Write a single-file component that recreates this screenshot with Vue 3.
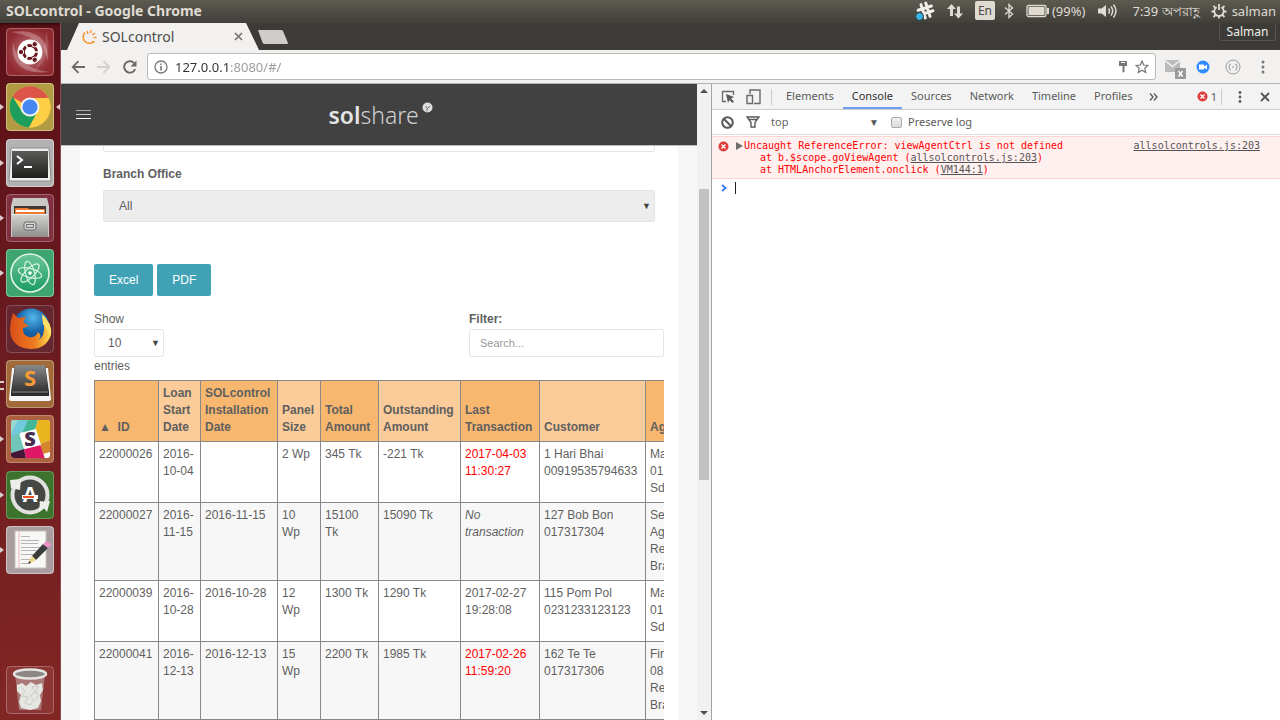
<script setup>
import { ref } from 'vue'

const url = ref('127.0.0.1:8080/#/')
const branch = ref('All')
const pageSize = ref('10')
const search = ref('')
const preserve = ref(false)
const command = ref('')
const activeTab = ref('Console')
const tabs = ['Elements', 'Console', 'Sources', 'Network', 'Timeline', 'Profiles']

const columns = [
  { key: 'id', lines: ['▲  ID'] },
  { key: 'start', lines: ['Loan', 'Start', 'Date'] },
  { key: 'install', lines: ['SOLcontrol', 'Installation', 'Date'] },
  { key: 'panel', lines: ['Panel', 'Size'] },
  { key: 'total', lines: ['Total', 'Amount'] },
  { key: 'due', lines: ['Outstanding', 'Amount'] },
  { key: 'last', lines: ['Last', 'Transaction'] },
  { key: 'customer', lines: ['Customer'] },
  { key: 'agent', lines: ['Ag'] }
]

const rows = [
  { id: '22000026', start: ['2016-', '10-04'], install: [], panel: ['2 Wp'], total: ['345 Tk'], due: ['-221 Tk'], last: ['2017-04-03', '11:30:27'], state: 'late', customer: ['1 Hari Bhai', '00919535794633'], agent: ['Ma', '01', 'Sd'] },
  { id: '22000027', start: ['2016-', '11-15'], install: ['2016-11-15'], panel: ['10', 'Wp'], total: ['15100', 'Tk'], due: ['15090 Tk'], last: ['No', 'transaction'], state: 'none', customer: ['127 Bob Bon', '017317304'], agent: ['Se', 'Ag', 'Re', 'Bra'] },
  { id: '22000039', start: ['2016-', '10-28'], install: ['2016-10-28'], panel: ['12', 'Wp'], total: ['1300 Tk'], due: ['1290 Tk'], last: ['2017-02-27', '19:28:08'], state: '', customer: ['115 Pom Pol', '0231233123123'], agent: ['Ma', '01', 'Sd'] },
  { id: '22000041', start: ['2016-', '12-13'], install: ['2016-12-13'], panel: ['15', 'Wp'], total: ['2200 Tk'], due: ['1985 Tk'], last: ['2017-02-26', '11:59:20'], state: 'late', customer: ['162 Te Te', '017317306'], agent: ['Fir', '08', 'Re', 'Bra'] }
]
</script>

<template>
  <div class="desktop">
    <header class="panel">
      <h1 class="win-title">SOLcontrol - Google Chrome</h1>
      <div class="tray">
        <svg class="t-slack" width="20" height="20" viewBox="0 0 20 20">
          <g stroke="#f2f0ea" stroke-width="3" stroke-linecap="round" transform="rotate(-18 10.500 9.500)"><path d="M8 2.500v14M13 2.500v14M3.500 7h14M3.500 12h14" /></g>
          <circle cx="4.500" cy="15.500" r="4" fill="#35b5e5" stroke="#34322e" />
        </svg>
        <svg class="t-net" width="16" height="16" viewBox="0 0 16 16" fill="#dfdbd2"><path d="M4.500 1 9 6H6v7H3V6H0zM11.500 15.500 7 10.500h3v-7h3v7h3z" /></svg>
        <span class="t-lang">En</span>
        <svg class="t-bt" width="10" height="16" viewBox="0 0 10 16" fill="none" stroke="#dfdbd2" stroke-width="1.300"><path d="M1 4.500 8.500 11 5 14.500V1.500L8.500 5 1 11.500" /></svg>
        <svg class="t-bat" width="23" height="14" viewBox="0 0 23 14"><rect x="1" y="1.500" width="19" height="11" rx="1.500" fill="none" stroke="#dfdbd2" stroke-width="1.300" /><rect x="2.500" y="3" width="16" height="8" fill="#dfdbd2" /><rect x="21" y="4" width="2" height="6" fill="#dfdbd2" /></svg>
        <span class="t-pct">(99%)</span>
        <svg class="t-vol" width="20" height="16" viewBox="0 0 20 16" fill="none" stroke="#dfdbd2" stroke-width="1.500"><path d="M0 5.500h3.500L8 2v12l-4.500-3.500H0z" fill="#dfdbd2" stroke="none" /><path d="M10.500 5.500q2 2.500 0 5M13 3.500q3.500 4.500 0 9M15.500 1.500q5 6.500 0 13" /></svg>
        <span class="t-time">7:39 অপরাহ্ণ</span>
        <svg class="t-gear" width="16" height="16" viewBox="0 0 16 16" fill="none" stroke="#dfdbd2"><path d="M5.700 4.200a4.700 4.700 0 1 0 4.600 0" stroke-width="1.800" /><path d="M8 1v6M2.500 2.800l2 2M13.500 2.800l-2 2M.5 8.500h3M12.500 8.500h3M2.500 14l2-2M13.500 14l-2-2M8 12.500v3" stroke-width="1.800" /></svg>
        <span class="t-user">salman</span>
      </div>
    </header>

    <div class="workspace">
      <nav class="launcher" aria-label="Launcher">
        <div class="apps">
          <button class="app" aria-label="Search">
            <svg viewBox="0 0 48 48"><defs><radialGradient id="gDash"><stop stop-color="#c98a8a" /><stop offset=".7" stop-color="#a04047" /><stop offset="1" stop-color="#902a31" /></radialGradient></defs><rect width="48" height="48" rx="4" fill="url(#gDash)" /><path d="M5 4C28 0 44 10 42 33 38 15 27 8 5 4zM43 44C18 47 4 36 7 14 10 32 22 41 43 44z" fill="#fff" opacity=".25" /><path d="M40 3Q48 25 29 43 40 23 40 3z" fill="#fff" opacity=".12" /><circle cx="24" cy="24" r="12.500" fill="#fff" /><circle cx="24" cy="24" r="6.500" fill="none" stroke="#6a1820" stroke-width="3" /><g stroke="#fff" stroke-width="1.500"><path d="M24 24 35 24M24 24 18.500 14.500M24 24 18.500 33.500" /></g><circle cx="24" cy="24" r="4.800" fill="#fff" /><g fill="#6a1820" stroke="#fff"><circle cx="15" cy="24" r="2.700" /><circle cx="28.700" cy="16.200" r="2.700" /><circle cx="28.700" cy="31.800" r="2.700" /></g><rect x=".5" y=".5" width="47" height="47" rx="4" fill="none" stroke="#fff" opacity=".28" /></svg>
          </button>
          <button class="app running focused" aria-label="Google Chrome">
            <svg viewBox="0 0 48 48"><rect width="48" height="48" rx="4" fill="#b19b43" /><circle cx="24" cy="24" r="20.500" fill="#fdcf45" /><path d="M24 24 6 14A20.500 20.500 0 0 1 42.500 15H24z" fill="#dd5549" /><path d="M6.500 13.500A20.500 20.500 0 0 0 23 44.500L32 28 24 24 15 27z" fill="#1d9e5d" /><path d="M24 15h18.500a20.500 20.500 0 0 1-19.500 29.500L32 28z" fill="#fdcf45" /><circle cx="24" cy="24" r="9.500" fill="#f4f4f1" /><circle cx="24" cy="24" r="7.600" fill="#4688f1" /><rect x=".5" y=".5" width="47" height="47" rx="4" fill="none" stroke="#fff" opacity=".35" /></svg>
          </button>
          <button class="app running" aria-label="Terminal">
            <svg viewBox="0 0 48 48"><defs><linearGradient id="gTerm" x2="0" y2="1"><stop stop-color="#5b5c59" /><stop offset="1" stop-color="#1f201e" /></linearGradient></defs><rect width="48" height="48" rx="4" fill="#b3b1b1" /><path d="M5 9h38l2 33H3z" fill="#eeeeec" stroke="#8c8c8a" /><rect x="6" y="12" width="36" height="27" fill="url(#gTerm)" /><path d="m11 17 5 4-5 4M18 28h8" fill="none" stroke="#fff" stroke-width="2" /><rect x=".5" y=".5" width="47" height="47" rx="4" fill="none" stroke="#fff" opacity=".4" /></svg>
          </button>
          <button class="app running" aria-label="Files">
            <svg viewBox="0 0 48 48"><defs><linearGradient id="gFile" x2="0" y2="1"><stop stop-color="#d5d5d3" /><stop offset="1" stop-color="#8f8f8d" /></linearGradient></defs><rect width="48" height="48" rx="4" fill="#803140" /><path d="M7 4h34l2 8v31H5V12z" fill="#c9c9c6" /><path d="M8 12h32v12H8z" fill="#413936" /><path d="M9 14h13l1 1h16v7H9z" fill="#ee7a31" /><path d="M10 16h28v2H10z" fill="#fff" /><rect x="6" y="20" width="36" height="23" fill="url(#gFile)" /><path d="M6 20.500h36" stroke="#eee" /><rect x="18" y="28" width="12" height="8" rx="2" fill="#d4d4d2" stroke="#686868" /><rect x="20.500" y="30.500" width="7" height="3" fill="none" stroke="#777" /><rect x=".5" y=".5" width="47" height="47" rx="4" fill="none" stroke="#fff" opacity=".25" /></svg>
          </button>
          <button class="app running" aria-label="Atom">
            <svg viewBox="0 0 48 48"><defs><linearGradient id="gAtom" x2="0" y2="1"><stop stop-color="#6cc596" /><stop offset="1" stop-color="#1a9c66" /></linearGradient></defs><rect width="48" height="48" rx="4" fill="#3fa56e" /><circle cx="24" cy="24" r="19" fill="url(#gAtom)" stroke="#e1f4e8" stroke-width="1.600" /><g fill="none" stroke="#d9f4e5" stroke-width="1.200"><ellipse cx="24" cy="24" rx="12" ry="4.500" transform="rotate(15 24 24)" /><ellipse cx="24" cy="24" rx="12" ry="4.500" transform="rotate(75 24 24)" /><ellipse cx="24" cy="24" rx="12" ry="4.500" transform="rotate(135 24 24)" /></g><circle cx="24" cy="24" r="1.800" fill="#fff" /><rect x=".5" y=".5" width="47" height="47" rx="4" fill="none" stroke="#fff" opacity=".35" /></svg>
          </button>
          <button class="app" aria-label="Firefox">
            <svg viewBox="0 0 48 48"><defs><radialGradient id="gFox" cx=".55" cy=".25" r=".8"><stop stop-color="#53b8e8" /><stop offset=".5" stop-color="#1763a8" /><stop offset="1" stop-color="#12386e" /></radialGradient><linearGradient id="gFur" x2="1" y2="0"><stop stop-color="#d94e19" /><stop offset=".6" stop-color="#ee7c1f" /><stop offset="1" stop-color="#ffe052" /></linearGradient></defs><rect width="48" height="48" rx="4" fill="#662630" /><circle cx="25" cy="22" r="18.500" fill="url(#gFox)" /><path d="M7 8 12 13 20 12 17 17 23 21 17 23Q16 30 23 32 30 33 32 27 37 31 32 35 39 32 38 20L36 12Q47 19 45 30 40 44 25 44 5 43 4 25 4 16 7 8z" fill="url(#gFur)" /><path d="M36 9q10 8 9 22-5-8-8-12z" fill="#ffdf68" /><rect x=".5" y=".5" width="47" height="47" rx="4" fill="none" stroke="#fff" opacity=".2" /></svg>
          </button>
          <button class="app running double" aria-label="Sublime Text">
            <svg viewBox="0 0 48 48"><defs><linearGradient id="gSub" x2="0" y2="1"><stop stop-color="#8a8a8a" /><stop offset="1" stop-color="#353535" /></linearGradient></defs><rect width="48" height="48" rx="4" fill="#a26a39" /><path d="M6 8h36l3 31q0 2-3 2H6q-3 0-3-2z" fill="#f5f5f5" /><path d="M9 5h30l4 27v4H5v-4z" fill="#2c2c2c" /><path d="M9 5h30l3 26H6z" fill="url(#gSub)" /><path d="M6 32h36" stroke="#8d8d8d" /><text x="24" y="26" text-anchor="middle" font-family="Open Sans,sans-serif" font-size="22" font-weight="700" fill="#f79a35">S</text><rect x=".5" y=".5" width="47" height="47" rx="4" fill="none" stroke="#fff" opacity=".3" /></svg>
          </button>
          <button class="app running" aria-label="Slack">
            <svg viewBox="0 0 48 48"><defs><clipPath id="cSlack"><rect x="5" y="5" width="39" height="38" rx="3" /></clipPath></defs><rect width="48" height="48" rx="4" fill="#ac6140" /><g clip-path="url(#cSlack)"><path d="M5 5h39v39H5z" fill="#fff" /><path d="M5 5h9L5 22z" fill="#98d8cf" /><path d="M12 5h11l-7 13L5 22v-3z" fill="#70cadb" /><path d="M22 5h10l-3 10-13 3z" fill="#42b899" /><path d="M32 5h12v20L34 29 29 15z" fill="#e9b51e" /><path d="m34 29 10-4v12l-7 2z" fill="#d5862b" /><path d="M18 34 34 29l5 15H20z" fill="#e01765" /><path d="M5 21 13 18l5 16-13 4z" fill="#70c7b9" /><path d="M5 38 18 34l2 10H5z" fill="#451638" /></g><path d="M14 18 30 14l5 16-16 4z" fill="#fff" /><text x="24" y="31" text-anchor="middle" font-family="Open Sans,sans-serif" font-size="20" font-weight="800" fill="#482c4c">S</text><rect x=".5" y=".5" width="47" height="47" rx="4" fill="none" stroke="#fff" opacity=".25" /></svg>
          </button>
          <button class="app running" aria-label="Software Updater">
            <svg viewBox="0 0 48 48"><rect width="48" height="48" rx="4" fill="#3d742d" /><circle cx="24" cy="24" r="17.500" fill="#454744" stroke="#e0e1df" stroke-width="4" /><path d="M15 7 14 19 5 17zM5 17 15 8 4 9zM33 41 34 30 44 32zM33 31l11-1-3 11z" fill="#eeeeec" /><text x="24" y="31" text-anchor="middle" font-family="Open Sans,sans-serif" font-size="21" font-weight="700" fill="#fff">A</text><path d="M16 24h16v4H16z" fill="#fff" /><path d="M17 25h11v2H17z" fill="#e9541f" /><rect x=".5" y=".5" width="47" height="47" rx="4" fill="none" stroke="#fff" opacity=".25" /></svg>
          </button>
          <button class="app running" aria-label="Text Editor">
            <svg viewBox="0 0 48 48"><rect width="48" height="48" rx="4" fill="#a99da0" /><path d="M9 5h31v37H9z" fill="#f7f7f5" stroke="#c3c3c1" /><path d="M13 5v37" stroke="#efb3b3" /><g stroke="#b5b5b5"><path d="M15 10.500h9M15 14.500h18M15 17.500h17M15 21.500h20M15 24.500h18M15 28.500h15M15 33.500h12M15 37.500h9" /></g><path d="m26 30 11-12 5 4-12 12z" fill="#3b3d3b" /><path d="M37 18 40 15.500q4 0 5 4L42 22z" fill="#eb8fc7" /><path d="m26 30 4 4-8 4z" fill="#e7d87c" /><path d="m23.500 35-1.500 3 3-1.500z" fill="#222" /><rect x=".5" y=".5" width="47" height="47" rx="4" fill="none" stroke="#fff" opacity=".4" /></svg>
          </button>
        </div>
        <button class="app" aria-label="Trash">
          <svg viewBox="0 0 48 48"><rect width="48" height="48" rx="4" fill="#8c3535" /><path d="M9 8h30l-4 36H13z" fill="#b79b99" opacity=".65" /><ellipse cx="24" cy="8" rx="16" ry="4.500" fill="#8c8785" stroke="#e4e4e1" stroke-width="2.500" /><path d="M11 19 16 17 20 20 25 16 30 19 36 17 37 24 34 29 35 35 32 42 24 44 15 42 13 36 15 29 11 25z" fill="#e5e5e2" /><path d="m15 21 4 4-3 5 6 1-3 6 5 2 4-5-4-4 5-4-3-5 6-1-2 7 3 2-4 5" fill="none" stroke="#cacac6" /><rect x=".5" y=".5" width="47" height="47" rx="4" fill="none" stroke="#fff" opacity=".25" /></svg>
        </button>
      </nav>

      <main class="browser">
        <div class="tabstrip">
          <div class="tab">
            <svg class="favicon" width="16" height="16" viewBox="0 0 16 16" fill="none" stroke="#f79433"><path d="M4 3.500A6 6 0 1 0 13 12.500" stroke-width="1.700" /><path d="m6 2 1 3M10 1 9.500 4M14 4l-3 2M15.500 8.500h-3M11.500 12l2 1.500" stroke-width="1.500" /></svg>
            <span class="tab-name">SOLcontrol</span>
            <button class="bare" aria-label="Close tab"><svg width="9" height="9" viewBox="0 0 9 9" stroke="#77756f" stroke-width="1.700"><path d="m1 1 7 7M8 1 1 8" /></svg></button>
          </div>
          <button class="bare newtab" aria-label="New tab"><svg width="32" height="14" viewBox="0 0 32 14"><path d="M1 0h23q1.500 0 2 1l5 12q0 1-1 1H8q-2 0-2.500-1.500z" fill="#cfcdca" /></svg></button>
          <button class="profile">Salman</button>
        </div>

        <div class="toolbar">
          <button class="bare" aria-label="Back"><svg width="14" height="14" viewBox="0 0 14 14" fill="none" stroke="#6b6965" stroke-width="1.800"><path d="M14 7H2M7.500 1.200 1.700 7l5.800 5.800" /></svg></button>
          <button class="bare" aria-label="Forward"><svg width="14" height="14" viewBox="0 0 14 14" fill="none" stroke="#d2d0cd" stroke-width="1.800"><path d="M0 7h12M6.500 1.200 12.300 7l-5.800 5.800" /></svg></button>
          <button class="bare" aria-label="Reload"><svg width="14" height="14" viewBox="0 0 14 14" fill="none" stroke="#6b6965" stroke-width="1.900"><path d="M12.200 9A5.700 5.700 0 1 1 11 3" /><path d="M13.500.5v6h-6z" fill="#6b6965" stroke="none" /></svg></button>
          <div class="omnibox">
            <svg width="14" height="14" viewBox="0 0 14 14" fill="none" stroke="#777" stroke-width="1.300"><circle cx="7" cy="7" r="6" /><path d="M7 6v4.500M7 3.500V5" stroke-width="1.600" /></svg>
            <input v-model="url" class="url" aria-label="Address" />
            <svg width="10" height="13" viewBox="0 0 10 13" fill="#777"><path d="M1 1h8v5H6.500v6l-2 .5V6H1z" /><path d="M3 2.500h4" stroke="#fff" /></svg>
            <svg width="14" height="14" viewBox="0 0 14 14" fill="none" stroke="#777" stroke-width="1.200"><path d="m7 1 1.700 4 4.300.4-3.200 2.900.9 4.200L7 10.300l-3.700 2.200.9-4.200L1 5.400 5.300 5z" /></svg>
          </div>
          <div class="extensions">
            <button class="bare" aria-label="Mail checker"><svg width="22" height="20" viewBox="0 0 22 20"><path d="M0 1h15v12H0z" fill="#bbb" /><path d="m0 1.500 7.500 6 7.500-6" fill="none" stroke="#f2f1f0" stroke-width="1.500" /><rect x="10" y="9" width="11" height="11" rx="1" fill="#999" /><path d="m13.500 12 4 5.500M17.500 12l-4 5.500" stroke="#fff" stroke-width="1.400" /></svg></button>
            <button class="bare" aria-label="Video meeting"><svg width="14" height="14" viewBox="0 0 14 14"><circle cx="7" cy="7" r="6.500" fill="#2d8cff" /><path d="M3 4.500h5v1.800l3-1.500v4.500L8 8v1.500H3z" fill="#fff" /></svg></button>
            <button class="bare" aria-label="JSON viewer"><svg width="16" height="16" viewBox="0 0 16 16" fill="none" stroke="#999"><circle cx="8" cy="8" r="7" /><path d="M6 5q-2 0-1.500 2L3.500 8l1 1q-.5 2 1.500 2M10 5q2 0 1.500 2l1 1-1 1q.5 2-1.500 2M7 8h2" /></svg></button>
            <button class="bare" aria-label="Menu"><svg width="4" height="14" viewBox="0 0 4 14" fill="#777"><circle cx="2" cy="2" r="1.500" /><circle cx="2" cy="7" r="1.500" /><circle cx="2" cy="12" r="1.500" /></svg></button>
          </div>
        </div>

        <div class="content">
          <section class="page">
            <div class="page-main">
              <div class="app-header">
                <button class="bare burger" aria-label="Menu"><svg width="15" height="10" viewBox="0 0 15 10" stroke="#fff"><path d="M0 .5h15" stroke="#aaa" /><path d="M0 4.500h15" stroke="#ccc" /><path d="M0 8.500h15" /></svg></button>
                <a class="brand" href="#/"><span><b>sol</b>share</span><svg width="11" height="11" viewBox="0 0 11 11"><circle cx="5.500" cy="5.500" r="5" fill="#dedede" /><path d="M5 9.500V7l3-3M5 6.500 4 4" fill="none" stroke="#777" /></svg></a>
              </div>
              <div class="scroller">
                <div class="card">
                  <div class="fields">
                    <input class="hidden-top" aria-label="Organisation" />
                    <label class="branch-label" for="branch">Branch Office</label>
                    <div class="select-box">
                      <select id="branch" v-model="branch" class="branch"><option>All</option></select>
                      <span class="caret">▼</span>
                    </div>
                  </div>
                  <div class="exports">
                    <button class="export">Excel</button>
                    <button class="export">PDF</button>
                  </div>
                  <div class="controls">
                    <div class="entries">
                      <label for="size">Show</label>
                      <div class="select-box">
                        <select id="size" v-model="pageSize" class="size"><option>10</option><option>25</option></select>
                        <span class="caret">▼</span>
                      </div>
                      <span>entries</span>
                    </div>
                    <div class="filter">
                      <label for="filter">Filter:</label>
                      <input id="filter" v-model="search" placeholder="Search..." />
                    </div>
                  </div>
                  <div class="table-wrap">
                    <table>
                      <colgroup><col v-for="c in columns" :key="c.key" :class="'w-' + c.key" /></colgroup>
                      <thead>
                        <tr><th v-for="c in columns" :key="c.key" scope="col"><div v-for="l in c.lines" :key="l">{{ l }}</div></th></tr>
                      </thead>
                      <tbody>
                        <tr v-for="r in rows" :key="r.id">
                          <td>{{ r.id }}</td>
                          <td><div v-for="l in r.start" :key="l">{{ l }}</div></td>
                          <td><div v-for="l in r.install" :key="l">{{ l }}</div></td>
                          <td><div v-for="l in r.panel" :key="l">{{ l }}</div></td>
                          <td><div v-for="l in r.total" :key="l">{{ l }}</div></td>
                          <td><div v-for="l in r.due" :key="l">{{ l }}</div></td>
                          <td :class="r.state"><div v-for="l in r.last" :key="l">{{ l }}</div></td>
                          <td><div v-for="l in r.customer" :key="l">{{ l }}</div></td>
                          <td><div v-for="l in r.agent" :key="l">{{ l }}</div></td>
                        </tr>
                      </tbody>
                    </table>
                  </div>
                </div>
              </div>
            </div>
            <div class="scrollbar">
              <svg width="14" height="14" viewBox="0 0 14 14"><path d="m3 9 4-4 4 4z" fill="#505050" /></svg>
              <div class="track"><div class="before"></div><div class="thumb"></div><div class="after"></div></div>
              <svg width="14" height="14" viewBox="0 0 14 14"><path d="m3 5 4 4 4-4z" fill="#505050" /></svg>
            </div>
          </section>

          <section class="devtools">
            <div class="dt-tabs">
              <button class="bare" aria-label="Inspect"><svg width="14" height="14" viewBox="0 0 14 14" fill="none" stroke="#6a6a6a" stroke-width="1.300"><path d="M5 11.500H1.500v-10h11V5" /><path d="m5 4 8 3-3 1.500 3 3-1.500 1.500-3-3L7 13z" fill="#5a5a5a" stroke="none" /></svg></button>
              <button class="bare device" aria-label="Toggle device"><svg width="15" height="16" viewBox="0 0 15 16" fill="none" stroke="#6a6a6a" stroke-width="1.400"><path d="M4 5V1h10v13.500H8" /><path d="M1 6.500h5.500v8H1z" /></svg></button>
              <button v-for="t in tabs" :key="t" class="dt-tab" :class="{ active: t === activeTab }" @click="activeTab = t">{{ t }}</button>
              <button class="bare more" aria-label="More tabs"><svg width="9" height="8" viewBox="0 0 9 8" fill="none" stroke="#5a5a5a" stroke-width="1.300"><path d="m1 .5 3 3.500-3 3.500M5 .5 8 4 5 7.500" /></svg></button>
              <div class="dt-right">
                <svg width="11" height="11" viewBox="0 0 11 11"><circle cx="5.500" cy="5.500" r="5" fill="#df3c3c" /><path d="m3.500 3.500 4 4M7.500 3.500l-4 4" stroke="#fff" stroke-width="1.400" /></svg>
                <span class="count">1</span>
                <button class="bare dots" aria-label="More options"><svg width="4" height="12" viewBox="0 0 4 12" fill="#5a5a5a"><circle cx="2" cy="1.500" r="1.400" /><circle cx="2" cy="6" r="1.400" /><circle cx="2" cy="10.500" r="1.400" /></svg></button>
                <button class="bare" aria-label="Close"><svg width="10" height="10" viewBox="0 0 10 10" stroke="#555" stroke-width="1.800"><path d="m1 1 8 8M9 1 1 9" /></svg></button>
              </div>
            </div>
            <div class="dt-bar">
              <button class="bare" aria-label="Clear console"><svg width="13" height="13" viewBox="0 0 13 13" fill="none" stroke="#5a5a5a" stroke-width="2"><circle cx="6.500" cy="6.500" r="5.300" /><path d="m2.800 2.800 7.400 7.400" /></svg></button>
              <button class="bare" aria-label="Filter"><svg width="14" height="12" viewBox="0 0 14 12" fill="none" stroke="#5a5a5a" stroke-width="1.400"><path d="M1 1h12L9 6.500V11H5V6.500zM2.500 3.500h9" /></svg></button>
              <div class="select-box context">
                <select aria-label="Context"><option>top</option></select>
                <span class="caret">▼</span>
              </div>
              <label class="preserve"><input v-model="preserve" type="checkbox" /><span>Preserve log</span></label>
            </div>
            <div class="message">
              <svg class="err" width="11" height="11" viewBox="0 0 11 11"><circle cx="5.500" cy="5.500" r="5" fill="#df3c3c" /><path d="m3.500 3.500 4 4M7.500 3.500l-4 4" stroke="#fff" stroke-width="1.400" /></svg>
              <svg class="tri" width="7" height="8" viewBox="0 0 7 8"><path d="M0 0 7 4 0 8z" fill="#6e6e6e" /></svg>
              <div class="trace">
                <div>Uncaught ReferenceError: viewAgentCtrl is not defined</div>
                <div class="at">at b.$scope.goViewAgent (<a href="#">allsolcontrols.js:203</a>)</div>
                <div class="at">at HTMLAnchorElement.onclick (<a href="#">VM144:1</a>)</div>
              </div>
              <a class="origin" href="#">allsolcontrols.js:203</a>
            </div>
            <div class="prompt">
              <svg width="6" height="8" viewBox="0 0 6 8" fill="none" stroke="#367cf1" stroke-width="1.800"><path d="m1 1 3.500 3L1 7" /></svg>
              <span class="cursor"></span>
              <input v-model="command" aria-label="Console prompt" />
            </div>
          </section>
        </div>
      </main>
    </div>
  </div>
</template>

<style>
body { margin: 0; overflow: hidden; }
</style>

<style scoped>
* { box-sizing: border-box; }
svg { display: block; flex: none; }
button, input, select { font-family: inherit; margin: 0; }
.desktop { height: 100vh; display: flex; flex-direction: column; font-family: "Noto Sans", "Open Sans", sans-serif; background: #3c3b37; overflow: hidden; }
.bare { border: 0; background: none; padding: 0; display: block; flex: none; }

.panel { flex: none; height: 23px; display: flex; align-items: center; justify-content: space-between; padding: 0 4px 2px 6px; background: linear-gradient(#5d5a51, #403f3a); color: #dfdbd2; }
.win-title { margin: 0; font-size: 14px; line-height: 20px; font-weight: 700; white-space: nowrap; }
.tray { display: flex; align-items: center; font-size: 13px; line-height: 20px; white-space: nowrap; }
.t-net { margin-left: 12px; }
.t-lang { margin-left: 12px; width: 20px; height: 19px; border-radius: 2px; background: #dfdbd2; color: #4b4943; font-size: 12px; line-height: 19px; text-align: center; }
.t-bt { margin-left: 9px; }
.t-bat { margin-left: 12px; }
.t-pct { margin-left: 3px; }
.t-vol { margin-left: 13px; }
.t-time { margin-left: 14px; }
.t-gear { margin-left: 11px; }
.t-user { margin-left: 5px; }

.workspace { flex: 1; min-height: 0; display: flex; }
.launcher { flex: none; width: 61px; padding: 5px 6px 6px; display: flex; flex-direction: column; justify-content: space-between; background: linear-gradient(#5a1017, #6d1c20 50%, #822624); border-right: 1px solid #8d4850; box-shadow: inset 0 3px 3px -2px #260509; }
.apps { height: 79.6%; display: flex; flex-direction: column; justify-content: space-between; }
.app { position: relative; border: 0; background: none; padding: 0; width: 48px; height: 48px; }
.app svg { width: 48px; height: 48px; }
.running::before { content: ""; position: absolute; left: -6px; top: 21px; border: solid transparent; border-width: 3px 0 3px 4px; border-left-color: #d9cccd; }
.double::before { border: 0; width: 4px; height: 5px; border-top: 2px solid #d9cccd; border-bottom: 2px solid #d9cccd; }
.focused::after { content: ""; position: absolute; right: -6px; top: 21px; border: solid transparent; border-width: 3px 4px 3px 0; border-right-color: #d9cccd; }

.browser { flex: 1; min-width: 0; display: flex; flex-direction: column; }
.tabstrip { flex: none; height: 27px; display: flex; align-items: flex-start; padding: 0 4px 0 6px; background: #3c3b37; }
.tab { position: relative; width: 192px; height: 27px; padding: 0 16px 0 14px; display: flex; align-items: center; gap: 5px; z-index: 0; }
.tab::before { content: ""; position: absolute; inset: 0; z-index: -1; background: #f2f1f0; clip-path: polygon(12px 0, 179px 0, 192px 100%, 0 100%); }
.tab-name { flex: 1; font-size: 14px; line-height: 20px; color: #4c4c4c; }
.newtab { margin-top: 7px; margin-left: -2px; }
.profile { margin-left: auto; width: 57px; height: 18px; padding: 0; border: 1px solid #57554f; border-top: 0; border-radius: 0 0 3px 3px; background: #3c3b37; color: #f0eeea; font-size: 12px; line-height: 17px; }
.toolbar { flex: none; height: 34px; display: flex; align-items: center; gap: 12px; padding: 0 15px 0 10px; background: #f2f1f0; border-bottom: 1px solid #b6b4b4; }
.omnibox { flex: 1; height: 27px; margin-left: -2px; display: flex; align-items: center; gap: 7px; padding: 0 6px; background: #fff; border: 1px solid #bcbab8; border-radius: 3px; }
.url { flex: 1; min-width: 0; border: 0; padding: 0; outline: 0; font-size: 13px; line-height: 20px; color: transparent; background: linear-gradient(to right, #303030 55px, #999 55px); -webkit-background-clip: text; background-clip: text; }
.extensions { flex: none; display: flex; align-items: center; gap: 12px; margin-left: -3px; }
.extensions .bare:nth-child(2) { margin-left: -3px; }
.extensions .bare:nth-child(n+3) { margin-left: 3px; }
.extensions .bare:first-child { margin-top: 5px; }
.extensions .bare:last-child { margin-left: 8px; }

.content { flex: 1; min-height: 0; display: grid; grid-template-columns: 651fr 568fr; }
.page { display: flex; min-width: 0; min-height: 0; font-family: "Liberation Sans", Arial, sans-serif; font-size: 12px; line-height: 17px; color: #5f5f5f; border-right: 1px solid #a3a3a3; }
.page-main { flex: 1; min-width: 0; display: flex; flex-direction: column; background: #f7f7f7; }
.app-header { flex: none; height: 62px; display: flex; align-items: center; background: #414142; border-bottom: 1px solid #bbb; padding: 0 15px; }
.burger { width: 15px; }
.brand { flex: 1; padding-right: 12px; display: flex; justify-content: center; gap: 3px; color: #d0d0d0; text-decoration: none; font-family: "Noto Sans", "Open Sans", sans-serif; font-size: 23px; line-height: 30px; font-weight: 300; }
.brand svg { margin-top: 2px; }
.brand b { font-weight: 600; color: #e4e4e4; }
.scroller { flex: 1; min-height: 0; overflow: hidden; padding: 0 19px; }
.card { background: #fff; padding: 0 14px; min-height: 100%; }
.fields { padding: 0 9px; display: flex; flex-direction: column; }
.hidden-top { height: 31px; margin-top: -25px; border: 1px solid #e5e5e5; border-radius: 2px; background: #fff; }
.branch-label { margin-top: 14px; font-weight: 700; }
.fields .select-box { margin-top: 7px; }
.select-box { position: relative; display: flex; }
select { appearance: none; width: 100%; color: #5f5f5f; font-size: 12px; line-height: 17px; outline: 0; }
.caret { position: absolute; right: 4px; top: 0; bottom: 0; display: flex; align-items: center; font-size: 9px; line-height: 10px; color: #444; pointer-events: none; }
.branch { height: 32px; padding: 0 15px; border: 1px solid #e4e4e4; border-radius: 2px; background: #ededed; }
.exports { margin-top: 42px; display: flex; gap: 4px; }
.export { height: 32px; padding: 0 15px; border: 0; border-radius: 2px; background: #41a2b6; color: #fff; font-size: 12px; line-height: 17px; }
.controls { margin-top: 15px; display: flex; justify-content: space-between; }
.entries { width: 70px; display: flex; flex-direction: column; }
.entries .select-box { margin: 1px 0; }
.size { height: 28px; padding: 0 13px; border: 1px solid #e5e5e5; border-radius: 2px; background: #fff; }
.filter { width: 195px; display: flex; flex-direction: column; gap: 1px; }
.filter label { font-weight: 700; }
.filter input { height: 28px; padding: 0 10px; border: 1px solid #e5e5e5; border-radius: 2px; font-size: 11px; color: #5f5f5f; outline: 0; }
.filter input::placeholder { color: #999; }
.table-wrap { margin-top: 5px; overflow: hidden; }
table { table-layout: fixed; width: 651px; border-collapse: collapse; }
th, td { border: 1px solid #888; padding: 4px 4px 5px; text-align: left; white-space: pre; overflow: hidden; }
th { vertical-align: bottom; background: #f8b76f; }
td { vertical-align: top; }
th:nth-child(even) { background: #fbcc99; }
tbody tr:nth-child(even) { background: #f7f7f7; }
.w-id { width: 64px; }
.w-start { width: 42px; }
.w-install { width: 77px; }
.w-panel { width: 43px; }
.w-total { width: 58px; }
.w-due { width: 82px; }
.w-last { width: 79px; }
.w-customer { width: 106px; }
.late { color: #f00; }
.none { font-style: italic; }
.scrollbar { flex: none; width: 14px; display: flex; flex-direction: column; background: #f1f1f1; }
.track { flex: 1; display: flex; flex-direction: column; padding: 0 2px; }
.before { flex: 91; }
.thumb { flex: 291; background: #c1c1c1; }
.after { flex: 226; }

.devtools { min-width: 0; background: #fff; color: #5a5a5a; font-size: 11px; line-height: 16px; }
.dt-tabs { height: 26px; display: flex; align-items: center; padding: 0 10px 0 9px; background: #f3f3f3; border-bottom: 1px solid #ccc; }
.device { margin-left: 11px; padding-right: 10px; margin-right: 5px; border-right: 1px solid #ccc; }
.dt-tab { height: 25px; padding: 0 9px; border: 0; border-bottom: 2px solid transparent; background: none; color: #5a5a5a; font-size: 11px; line-height: 16px; }
.active { color: #333; border-bottom-color: #6f9ef5; }
.more { margin-left: 7px; }
.dt-right { margin-left: auto; display: flex; align-items: center; }
.count { margin-left: 3px; padding-right: 4px; border-right: 1px solid #ccc; }
.dots { margin: 0 18px 0 16px; }
.dt-bar { height: 25px; display: flex; align-items: center; gap: 12px; padding: 0 9px; border-bottom: 1px solid #ddd; }
.context { width: 108px; margin-left: -1px; }
.context .caret { right: 0; color: #5a5a5a; font-size: 10px; }
.context select { border: 0; padding: 0; background: none; font-size: 11px; line-height: 16px; }
.preserve { display: flex; align-items: center; gap: 6px; }
.preserve input { appearance: none; width: 11px; height: 11px; border: 1px solid #aaa; border-radius: 2px; background: linear-gradient(#eee, #ddd); }
.message { margin-top: 1px; display: flex; align-items: flex-start; padding: 3px 20px 2px 6px; background: #fff0f0; border: solid #ffd6d6; border-width: 1px 0; color: #f00; font-family: "DejaVu Sans Mono", monospace; font-size: 10px; line-height: 12px; white-space: nowrap; }
.message a { color: #555; text-decoration: underline; }
.err { margin-top: 1px; }
.tri { margin: 2px 1px 0 7px; }
.at { padding-left: 16px; }
.origin { margin-left: auto; }
.prompt { height: 18px; display: flex; align-items: center; padding-left: 9px; }
.cursor { width: 1px; height: 12px; margin-left: 8px; background: #222; }
.prompt input { flex: 1; border: 0; padding: 0; outline: 0; font-family: "DejaVu Sans Mono", monospace; font-size: 10px; }
</style>
